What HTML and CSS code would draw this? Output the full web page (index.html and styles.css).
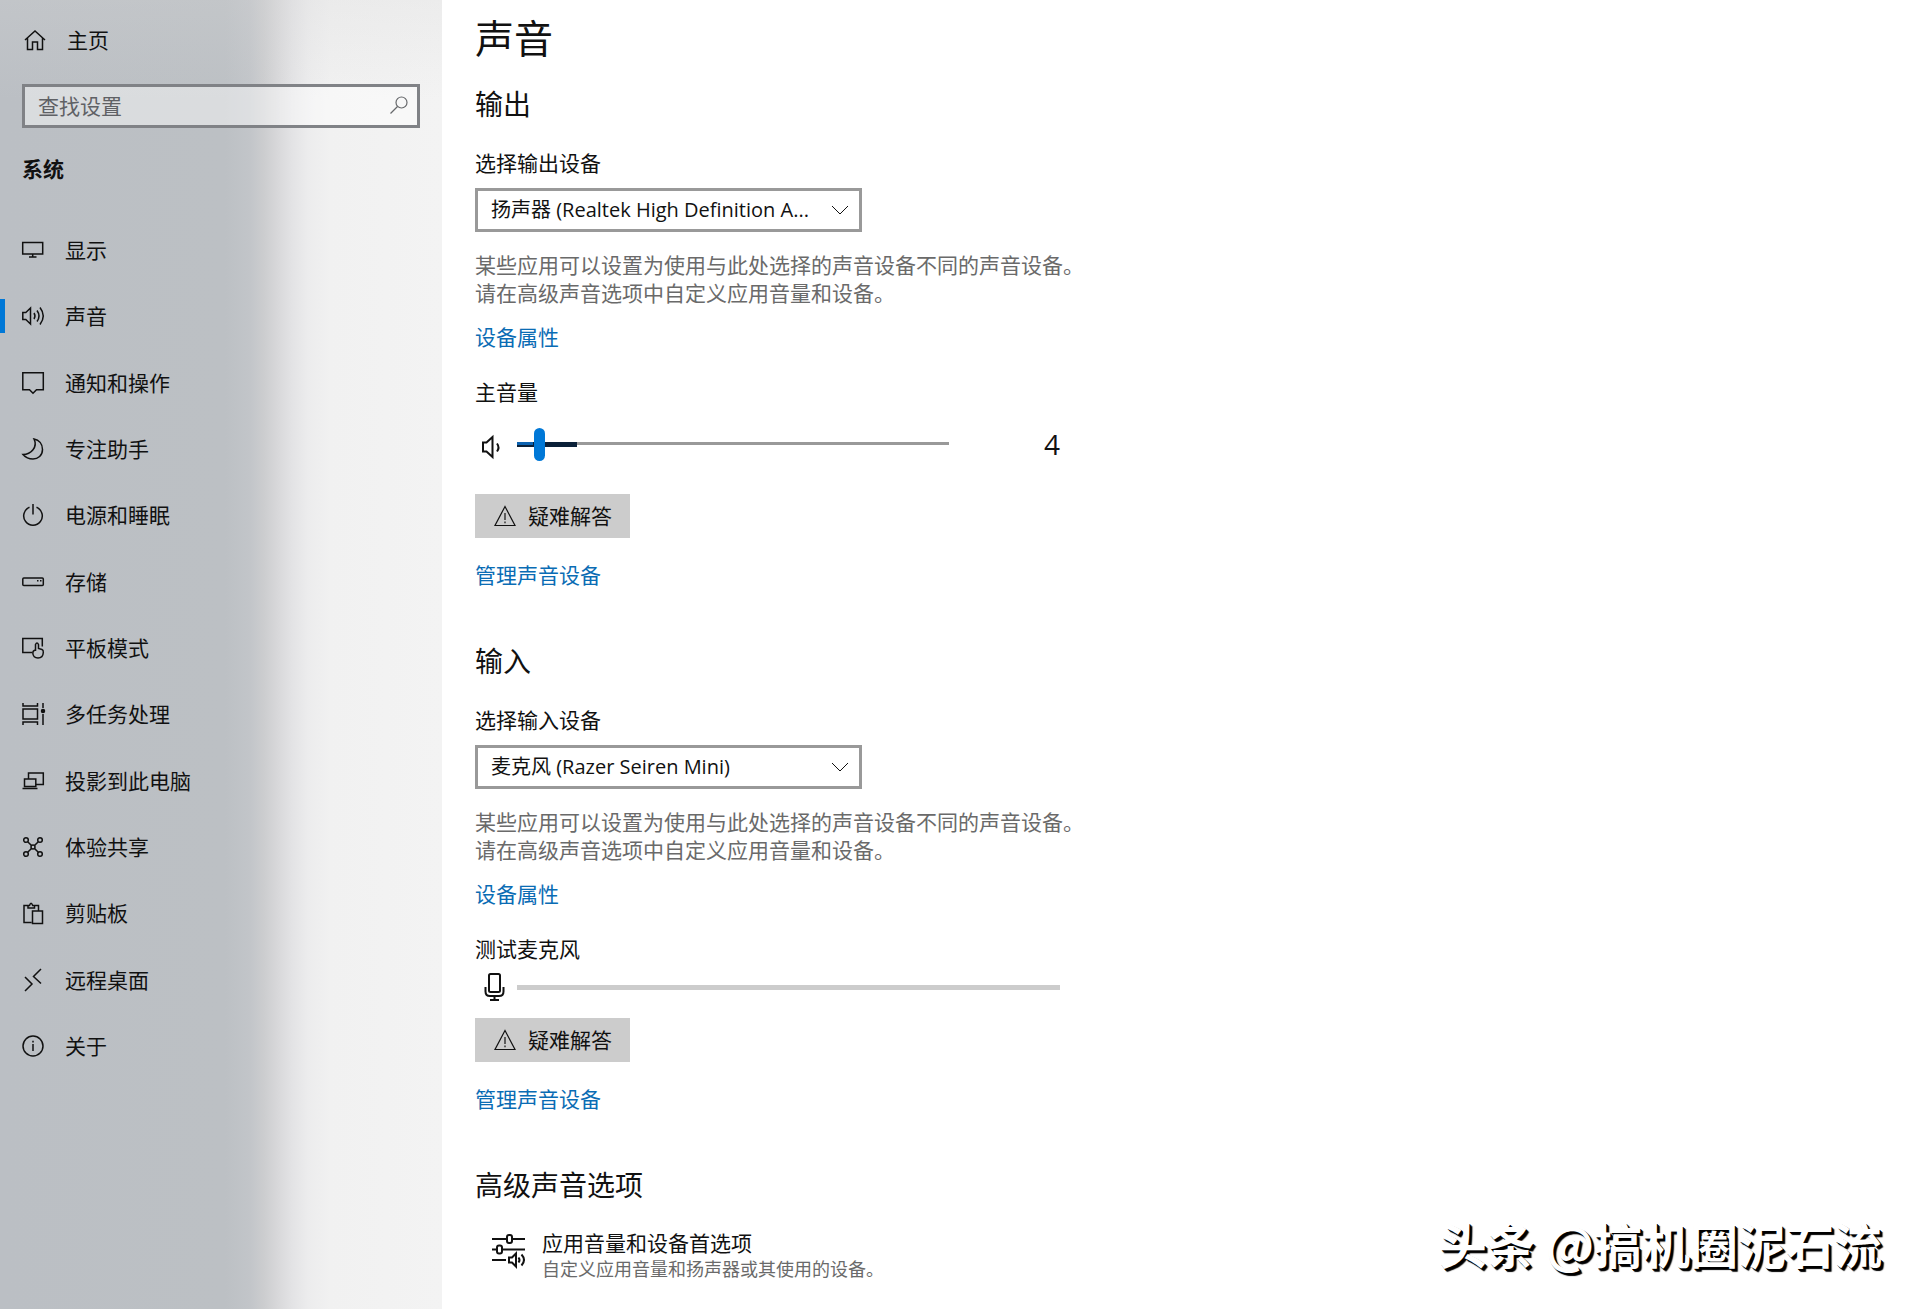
FILE: index.html
```html
<!DOCTYPE html>
<html lang="zh-CN">
<head>
<meta charset="utf-8">
<meta name="viewport" content="width=device-width, initial-scale=1">
<title>设置 - 声音</title>
<link rel="stylesheet" href="styles.css">
</head>
<body>
<div class="app">
  <aside class="sidebar">
    <a class="home" href="#">
      <svg class="icon" viewBox="0 0 22 22"><path d="M1 11 11 2l10 9M3.500 9v11.500H8.500v-7.500h5v7.500h5V9"/></svg>
      <span>主页</span>
    </a>
    <div class="search">
      <input type="search" placeholder="查找设置" aria-label="查找设置">
      <svg class="icon search-icon" viewBox="0 0 22 22"><circle cx="13.500" cy="7.500" r="5.500"/><path d="M9.500 11.500 2.500 18.500"/></svg>
    </div>
    <h2 class="group">系统</h2>
    <nav>
      <ul class="nav">
        <li><a href="#"><svg class="icon" viewBox="0 0 22 22"><path d="M.7 3.500h20v11.500H.7zM10.700 15v3M7 18h7.500"/></svg>显示</a></li>
        <li><a class="active" href="#" aria-current="page"><svg class="icon" viewBox="0 0 22 22"><path d="M.8 7.500h3L8.500 3v16L3.800 14.500h-3zM12 8q2 3 0 6M15 5.500q4 5.500 0 11M18 2.500q6.500 8.500 0 17"/></svg>声音</a></li>
        <li><a href="#"><svg class="icon" viewBox="0 0 22 22"><path d="M.8 .8h20.500v17H14.500l-3.500 3.500-3.500-3.500H.8z"/></svg>通知和操作</a></li>
        <li><a href="#"><svg class="icon" viewBox="0 0 22 22"><path d="M12 1c5 1 8.500 5 8.500 10.500C20.500 17.500 16 21 11 21c-4 0-7.500-1.500-10-4.500C9 16.500 16 9 12 1z"/></svg>专注助手</a></li>
        <li><a href="#"><svg class="icon" viewBox="0 0 22 22"><path d="M11 0v10.500M7.500 3.300a9.300 9.300 0 1 0 7 0"/></svg>电源和睡眠</a></li>
        <li><a href="#"><svg class="icon" viewBox="0 0 22 22"><rect x=".8" y="7" width="20.500" height="7.500" rx="1"/><path d="M15 9.800h1.500M18 9.800h1.500"/></svg>存储</a></li>
        <li><a href="#"><svg class="icon" viewBox="0 0 22 22"><path d="M10 15.500H.8V1.500h19.500v8M13.500 14V7.500q1.500-3 3 0v4l3.500 1q1.500.5 1.300 3c-.2 3.500-2 5.500-5.300 5.500s-5-2-5.200-5q0-2.500 2.700-3"/></svg>平板模式</a></li>
        <li><a href="#"><svg class="icon" viewBox="0 0 22 22"><path d="M1 0v3h14.500V0M1 22v-3h14.500V22M1 6h14.500v10H1zM21 0v5M21 11v11"/><circle cx="21" cy="8" r="1.500" fill="currentColor"/></svg>多任务处理</a></li>
        <li><a href="#"><svg class="icon" viewBox="0 0 22 22"><path d="M6.500 9V3h14.800v11.500H14M2.500 9h11.300v7.500H2.500zM.5 18.500h15"/></svg>投影到此电脑</a></li>
        <li><a href="#"><svg class="icon" viewBox="0 0 22 22"><circle cx="4" cy="4" r="2.300"/><circle cx="18" cy="4" r="2.300"/><circle cx="4" cy="18" r="2.300"/><circle cx="18" cy="18" r="2.300"/><circle cx="11" cy="11" r="2"/><path d="m5.700 5.700 3.800 3.800m3 3 3.800 3.800m0-10.600-3.800 3.800m-3 3-3.800 3.800"/></svg>体验共享</a></li>
        <li><a href="#"><svg class="icon" viewBox="0 0 22 22"><path d="M9.500 20.500H2v-17h4M12 3.500h4.500V9M6 6V3.500h1.500Q9-1 10.700 3.500H12.500V6zM10.500 9h10v12.500h-10z"/></svg>剪贴板</a></li>
        <li><a href="#"><svg class="icon" viewBox="0 0 22 22"><path d="m3 8 7 7-7 7M19 0l-7.500 7.500L19 14.500"/></svg>远程桌面</a></li>
        <li><a href="#"><svg class="icon" viewBox="0 0 22 22"><circle cx="11" cy="11" r="10"/><path d="M11 9v7M11 5.800v1.700"/></svg>关于</a></li>
      </ul>
    </nav>
  </aside>

  <main class="content">
    <h1>声音</h1>

    <section>
      <h2>输出</h2>
      <label class="field-label" for="output-device">选择输出设备</label>
      <div class="select">
        <select id="output-device"><option>扬声器 (Realtek High Definition A...</option></select>
        <svg class="chevron" viewBox="0 0 18 10"><path d="m1 1 8 8 8-8"/></svg>
      </div>
      <p class="hint">某些应用可以设置为使用与此处选择的声音设备不同的声音设备。<br>请在高级声音选项中自定义应用音量和设备。</p>
      <a class="link" href="#">设备属性</a>
      <label class="field-label" for="volume">主音量</label>
      <div class="level-row volume-row">
        <svg class="level-icon speaker" viewBox="0 0 28 28"><path d="M3 9.500h3.500L12.500 4v20L6.500 18.500H3zM17 10.500q3 4 0 8"/></svg>
        <input class="slider" id="volume" type="range" min="0" max="100" value="4">
        <output for="volume">4</output>
      </div>
      <button class="button" type="button"><svg class="icon" viewBox="0 0 22 22"><path d="M11 1.500 21 20.500H1zM11 8v7M11 16.500v1.700"/></svg>疑难解答</button>
      <a class="link manage" href="#">管理声音设备</a>
    </section>

    <section>
      <h2>输入</h2>
      <label class="field-label" for="input-device">选择输入设备</label>
      <div class="select">
        <select id="input-device"><option>麦克风 (Razer Seiren Mini)</option></select>
        <svg class="chevron" viewBox="0 0 18 10"><path d="m1 1 8 8 8-8"/></svg>
      </div>
      <p class="hint">某些应用可以设置为使用与此处选择的声音设备不同的声音设备。<br>请在高级声音选项中自定义应用音量和设备。</p>
      <a class="link" href="#">设备属性</a>
      <p class="field-label" id="mic-test">测试麦克风</p>
      <div class="level-row mic-row">
        <svg class="level-icon mic" viewBox="0 0 28 28"><rect x="9" y="1" width="11" height="18" rx="1.500"/><path d="M5.500 14v4.500q0 4.500 4.500 4.500h9q4.500 0 4.500-4.500V14M14.500 23v4M10 27h9"/></svg>
        <div class="meter" role="meter" aria-labelledby="mic-test" aria-valuenow="0"></div>
      </div>
      <button class="button" type="button"><svg class="icon" viewBox="0 0 22 22"><path d="M11 1.500 21 20.500H1zM11 8v7M11 16.500v1.700"/></svg>疑难解答</button>
      <a class="link manage" href="#">管理声音设备</a>
    </section>

    <section>
      <h2>高级声音选项</h2>
      <a class="option" href="#">
        <svg class="option-icon" viewBox="0 0 34 34"><path d="M0 5h15M20 5h13M0 15.500h5M10 15.500h23M0 26h14"/><rect x="15" y="1" width="5" height="8" rx="2"/><rect x="5" y="11.500" width="5" height="8" rx="2"/><path d="M17 23.500h3l4-4v13l-4-4h-3zM26.500 23.500q2 2.500 0 5M29.500 20.500q5 5.500 0 11"/></svg>
        <span class="option-text"><span class="option-title">应用音量和设备首选项</span><span class="option-sub">自定义应用音量和扬声器或其使用的设备。</span></span>
      </a>
    </section>
  </main>
</div>
<div class="watermark">头条 @搞机圈泥石流</div>
</body>
</html>
```
FILE: styles.css
```css
*, *::before { box-sizing: border-box; }

body {
  margin: 0;
  background: #fff;
  color: #111;
  font: 21px/28px "Open Sans", "Noto Sans CJK SC", sans-serif;
}

h1, h2, p, ul { margin: 0; padding: 0; font-weight: 400; }
a { color: inherit; text-decoration: none; }
input, select, button { font: inherit; color: inherit; margin: 0; }

svg { fill: none; stroke: currentColor; stroke-width: 1.5; overflow: visible; flex: none; }
.icon { width: 22px; height: 22px; }

.app {
  display: grid;
  grid-template-columns: 442px 1fr;
  min-height: 100vh;
}

/* Sidebar */
.sidebar {
  background:
    linear-gradient(rgba(215, 215, 215, .25), transparent 100px),
    linear-gradient(90deg, #bbbfc4 0, #bcc0c4 225px, #c2c5c9 250px, #cccdcf 264px, #d8d8da 278px, #e3e3e5 292px, #ececed 308px, #f1f1f1 330px, #f3f3f3 100%);
}

.home {
  display: flex;
  align-items: center;
  gap: 21px;
  padding-left: 24px;
  height: 28px;
  margin-top: 26px;
}

.search {
  position: relative;
  margin: 30px 22px 0;
}

.search input {
  display: block;
  width: 100%;
  height: 44px;
  padding: 0 48px 0 13px;
  border: 3px solid #808286;
  border-radius: 0;
  background: rgba(255, 255, 255, .45);
  appearance: none;
  outline: 0;
}

.search input::placeholder { color: #5f6165; opacity: 1; }

.search-icon {
  position: absolute;
  right: 10px;
  top: 11px;
  color: #66686b;
  stroke-width: 1.2;
}

.group {
  margin: 27px 22px 34px;
  font-size: 21px;
  font-weight: 700;
}

.nav {
  display: grid;
  grid-auto-rows: 1fr;
  min-height: 862px;
  list-style: none;
}

.nav a {
  position: relative;
  display: flex;
  align-items: center;
  gap: 21px;
  height: 100%;
  padding-left: 22px;
}

.active::before {
  content: "";
  position: absolute;
  left: 0;
  top: 50%;
  width: 5px;
  height: 34px;
  margin-top: -17px;
  background: #0078d7;
}

/* Content */
.content { padding: 12px 32px 24px 33px; }

h1 { font-size: 39px; line-height: 52px; }
.content h2 { font-size: 28px; line-height: 36px; }
h1 + section { margin-top: 22px; }
section + section { margin-top: 54px; }

.field-label { display: block; margin-top: 27px; }

.select {
  position: relative;
  max-width: 387px;
  margin-top: 11px;
}

.select select {
  display: block;
  width: 100%;
  height: 44px;
  padding: 0 36px 0 13px;
  border: 3px solid #999;
  border-radius: 0;
  background: #fff;
  font-size: 20px;
  appearance: none;
}

.chevron {
  position: absolute;
  right: 13px;
  top: 17px;
  width: 18px;
  height: 10px;
  stroke-width: 1;
  pointer-events: none;
}

.hint { margin-top: 19px; color: #6a6a6a; }

.link {
  display: block;
  width: fit-content;
  margin-top: 16px;
  color: #0a6cb4;
}

.manage { margin-top: 23px; }

.level-row {
  display: flex;
  align-items: center;
  max-width: 585px;
  height: 36px;
}

.level-icon { width: 28px; height: 28px; stroke-width: 2; }
.speaker { margin: 6px 9px 0 5px; }
.mic { margin: 0 9px 0 5px; }
.volume-row { margin: 20px 0 32px; }
.mic-row { margin: 6px 0 13px; }

.slider {
  flex: 0 1 432px;
  min-width: 0;
  height: 36px;
  appearance: none;
  background:
    linear-gradient(#0c62b0, #0c62b0) 0 16px / 16px 3px no-repeat,
    linear-gradient(#0a2038, #0a2038) 0 16px / 60px 5px no-repeat,
    linear-gradient(#999, #999) 0 16px / 100% 3px no-repeat;
}

.slider::-webkit-slider-thumb {
  appearance: none;
  width: 11px;
  height: 33px;
  border-radius: 6px;
  background: #0078d7;
}

.volume-row output {
  margin-left: auto;
  font-size: 28px;
  line-height: 36px;
}

.meter { flex: 1; height: 5px; background: #ccc; }

.button {
  display: flex;
  align-items: center;
  gap: 12px;
  height: 44px;
  padding: 0 18px 0 19px;
  border: 0;
  background: #ccc;
}

.button .icon { stroke-width: 1.2; }

.option {
  display: flex;
  align-items: flex-start;
  gap: 16px;
  width: fit-content;
  margin: 26px 0 0 17px;
}

.option-icon { width: 34px; height: 34px; margin-top: 5px; stroke-width: 2; }
.option-text { display: grid; }
.option-sub { font-size: 18px; line-height: 24px; color: #6a6a6a; }

.watermark {
  position: absolute;
  right: 38px;
  bottom: 34px;
  color: #fff;
  font-family: "Noto Sans CJK SC", sans-serif;
  font-size: 48px;
  font-weight: 700;
  line-height: 64px;
  text-shadow: 1px 1px 0 #000, 2px 2px 0 #000, 3px 3px 1px #000;
}
```
